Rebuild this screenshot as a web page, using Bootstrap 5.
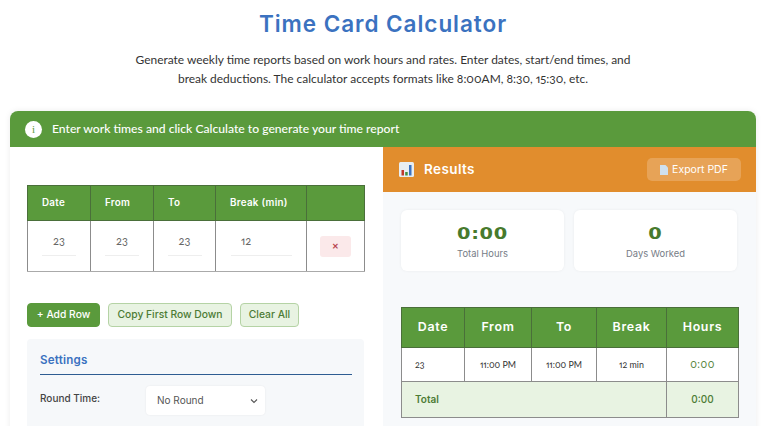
<!DOCTYPE html>
<html lang="en"><head><meta charset="utf-8"><title>Time Card Calculator</title>
<link href="https://cdn.jsdelivr.net/npm/bootstrap@5.3.0/dist/css/bootstrap.min.css" rel="stylesheet">
<style>
html,body{overflow:hidden;background:#fff}
body{font-family:"Lato","Liberation Sans",sans-serif;color:#333;font-variant-numeric:oldstyle-nums proportional-nums}
.page-wrap{padding:0 12px 0 10px}
.main-title{font-family:"Inter",sans-serif;font-weight:600;font-size:22.5px;letter-spacing:.95px;color:#3b72c0;text-align:center;line-height:26px;margin:11px 0 0}
.intro{font-size:11.95px;line-height:19px;text-align:center;color:#333;margin:13px 0 23px;padding:0 110px}
.calc-shell{border-radius:8px 8px 0 0;box-shadow:0 0 6px rgba(0,0,0,.08);overflow:hidden}
.calc-banner{background:#5a9a3c;color:#fff;height:36px;padding:0 11px 0 15px;font-size:12.15px;font-weight:500;gap:10px}
.info-dot{width:17px;height:17px;border-radius:50%;background:#fff;color:#5a9a3c;font-size:11px;font-family:"Liberation Serif",serif;line-height:17px;text-align:center}
.left-pane{padding:38px 19px 0 17px;background:#fff;height:285px}
.right-pane{background:#f7f9fb;height:285px}
.res-head{background:#e18d2d;color:#fff;height:45px;padding:0 15px 0 16px}
.res-title{font-family:"Inter",sans-serif;font-weight:600;font-size:13.5px;letter-spacing:.4px;margin-left:2px}
.export-btn{background:rgba(255,255,255,.2);color:#fff;border:0;border-radius:5px;font-size:10.5px;font-family:"Inter",sans-serif;height:23px;width:94px;padding:0}
.res-body{padding:18px 19px 0 18px}
.stat-box{background:#fff;border-radius:6px;height:61px;box-shadow:0 0 3px rgba(0,0,0,.06);text-align:center;flex:1}
.stat-num{font-family:"DejaVu Sans",sans-serif;font-weight:700;font-size:15.5px;color:#477a2d;line-height:18px;padding-top:15px;letter-spacing:.6px;font-variant-numeric:lining-nums;transform:scaleX(1.25)}
.stat-lab{font-family:"Inter",sans-serif;font-size:9.4px;color:#767c86;line-height:12px;margin-top:5px}
.time-tbl{border-collapse:collapse;table-layout:fixed;width:337px;margin:0}
.time-tbl th{background:#5a9a3c;color:#fff;border:1px solid #4a6f3a;font-family:"Inter",sans-serif;font-weight:600}
.time-tbl td{border:1px solid #8c8c8c;background:#fff}
.entry-tbl th{height:35px;font-size:9.8px;letter-spacing:.3px;padding:0 0 0 14px;text-align:left}
.entry-tbl td{height:51px;padding:0;font-size:11px;color:#666;vertical-align:middle;border-bottom-color:#aaa}
.entry-val{display:block;width:34px;margin:-2px auto 0;text-align:center;padding-bottom:7px;border-bottom:1px solid #eee;line-height:14px}
.entry-val-wide{width:61px;text-align:left;margin-left:15px;padding-left:10px}
.del-btn{width:31px;height:21px;background:#fbe9ea;color:#b8454f;border-radius:3px;font-size:8px;line-height:21px;text-align:center;margin:0 auto;font-weight:700}
.action-row{margin-top:31px;gap:8px}
.act{height:24px;border-radius:4px;font-family:"Inter",sans-serif;font-size:10.3px;font-weight:500;padding:0;border:1px solid #b5d3a5;background:#e8f3e2;color:#4d7c35}
.act-add{width:73px;background:#5a9a3c;color:#fff;border-color:#5a9a3c}
.act-copy{width:124px}
.act-clear{width:59px}
.settings-box{background:#f6f8fa;margin-top:12px;height:110px;padding:14px 12px 0 13px;border-radius:4px 4px 0 0}
.settings-title{font-family:"Inter",sans-serif;font-weight:600;font-size:11.6px;color:#3b72c0;line-height:14px;padding-bottom:7px;border-bottom:1.5px solid #2e5c92;letter-spacing:.2px}
.round-row{margin-top:11px}
.round-lab{width:106px;font-family:"Inter",sans-serif;font-size:10px;font-weight:500;color:#444;padding-top:5px}
.round-sel{width:119px;height:29px;background:#fff;border-radius:4px;box-shadow:0 0 2px rgba(0,0,0,.08);font-size:10px;font-family:"Inter",sans-serif;color:#555;padding:0 7px 0 11px}
.res-tbl{margin-top:36px}
.res-tbl th{height:40px;font-size:12.4px;text-align:center;letter-spacing:.7px}
.res-tbl td{font-size:8.9px;text-align:center;color:#333;height:34px;padding:0}
.res-tbl .cell-date{text-align:left;padding-left:13px}
.res-tbl .hrs{color:#55843b;font-size:10.5px;letter-spacing:.5px}
.res-tbl tr.total td{background:#e8f3e2;color:#4d7c35;height:36px;font-size:10px;font-family:"Inter",sans-serif;font-weight:500}
.res-tbl tr.total td.cell-date{padding-left:13px;font-weight:600}
</style></head>
<body>
<div class="page-wrap">
<h1 class="main-title">Time Card Calculator</h1>
<p class="intro">Generate weekly time reports based on work hours and rates. Enter dates, start/end times, and break deductions. The calculator accepts formats like 8:00AM, 8:30, 15:30, etc.</p>
<div class="calc-shell">
  <div class="calc-banner d-flex align-items-center"><span class="info-dot">i</span><span>Enter work times and click Calculate to generate your time report</span></div>
  <div class="row g-0">
    <div class="col-6 left-pane">
      <table class="time-tbl entry-tbl">
        <colgroup><col style="width:63px"><col style="width:63px"><col style="width:62px"><col style="width:91px"><col style="width:58px"></colgroup>
        <thead><tr><th>Date</th><th>From</th><th>To</th><th>Break (min)</th><th></th></tr></thead>
        <tbody><tr><td><span class="entry-val">23</span></td><td><span class="entry-val">23</span></td><td><span class="entry-val">23</span></td><td><span class="entry-val entry-val-wide">12</span></td><td><div class="del-btn">✕</div></td></tr></tbody>
      </table>
      <div class="d-flex action-row">
        <button class="btn act act-add">+ Add Row</button>
        <button class="btn act act-copy">Copy First Row Down</button>
        <button class="btn act act-clear">Clear All</button>
      </div>
      <div class="settings-box">
        <div class="settings-title">Settings</div>
        <div class="d-flex align-items-start round-row">
          <div class="round-lab">Round Time:</div>
          <div class="round-sel d-flex align-items-center justify-content-between"><span>No Round</span>
            <svg width="8" height="6" viewBox="0 0 8 6"><path d="M1 1.5l3 3 3-3" fill="none" stroke="#555" stroke-width="1.1"/></svg></div>
        </div>
      </div>
    </div>
    <div class="col-6 right-pane">
      <div class="res-head d-flex align-items-center justify-content-between">
        <div class="d-flex align-items-center gap-2"><svg width="15" height="15" viewBox="0 0 15 15"><rect width="15" height="15" rx="1.5" fill="#e8eef2"/><rect x="2.5" y="8" width="2.5" height="5.5" fill="#c0392b"/><rect x="6.2" y="10" width="2.5" height="3.5" fill="#3f8f3f"/><rect x="10" y="3" width="2.5" height="10.5" fill="#3b72c0"/></svg><span class="res-title">Results</span></div>
        <button class="btn export-btn d-flex align-items-center justify-content-center gap-1"><svg width="8" height="10" viewBox="0 0 8 10"><path d="M0 0h5.5L8 2.5V10H0z" fill="#cfe0ee"/></svg>Export PDF</button>
      </div>
      <div class="res-body">
        <div class="d-flex" style="gap:10px">
          <div class="stat-box"><div class="stat-num">0:00</div><div class="stat-lab">Total Hours</div></div>
          <div class="stat-box"><div class="stat-num">0</div><div class="stat-lab">Days Worked</div></div>
        </div>
        <table class="time-tbl res-tbl">
          <colgroup><col style="width:63px"><col style="width:67px"><col style="width:65px"><col style="width:70px"><col style="width:72px"></colgroup>
          <thead><tr><th>Date</th><th>From</th><th>To</th><th>Break</th><th>Hours</th></tr></thead>
          <tbody>
            <tr><td class="cell-date">23</td><td>11:00 PM</td><td>11:00 PM</td><td>12 min</td><td class="hrs">0:00</td></tr>
            <tr class="total"><td colspan="4" class="cell-date">Total</td><td>0:00</td></tr>
          </tbody>
        </table>
      </div>
    </div>
  </div>
</div>
</div>
</body></html>
